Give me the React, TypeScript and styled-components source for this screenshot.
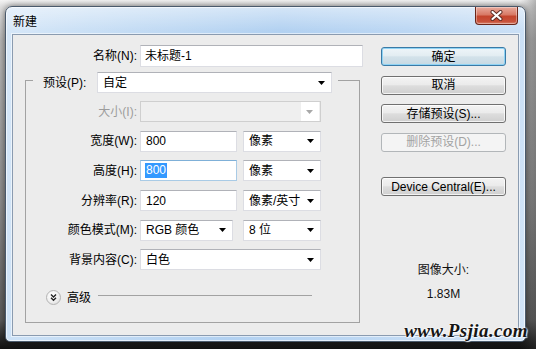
import React from "react";
import styled, { createGlobalStyle, css } from "styled-components";

const Global = createGlobalStyle`
  html, body { margin: 0; padding: 0; }
  body {
    width: 536px;
    height: 349px;
    overflow: hidden;
    background:
      linear-gradient(to right, rgba(0,0,0,0) 0, rgba(0,0,0,0) 520px, rgba(60,60,60,.35) 536px),
      linear-gradient(to bottom, #f4f4f4 0, #e2e2e2 6px, #b8b8b8 40px, #8e8e8e 200px, #5c5c5c 320px, #1c1c1c 343px, #111 349px);
    font-family: "Liberation Sans", "Noto Sans CJK SC", sans-serif;
    font-size: 12px;
    color: #000;
  }
`;

const Stage = styled.div`
  position: relative;
  width: 536px;
  height: 349px;
  box-sizing: border-box;
  padding: 6px 0 0 5px;
`;

const Window = styled.div`
  width: 521px;
  height: 336px;
  box-sizing: border-box;
  border: 1px solid #4a5a6c;
  border-radius: 7px 7px 5px 5px;
  padding: 0 6px 5px 6px;
  display: flex;
  flex-direction: column;
  background:
    linear-gradient(to bottom, rgba(255,255,255,.45) 0, rgba(255,255,255,0) 24px),
    linear-gradient(100deg, #d6e7f8 0%, #c4dcf4 22%, #b2d1f1 48%, #bcd7f3 70%, #d2e4f7 100%);
  box-shadow: 0 0 7px rgba(0,0,0,.55), inset 0 0 0 1px rgba(255,255,255,.6);
`;

const TitleBar = styled.div`
  height: 27px;
  display: flex;
  align-items: center;
  justify-content: space-between;
  padding: 0 1px 0 1px;
`;

const Title = styled.span`
  font-size: 12px;
  color: #000;
  text-shadow: 0 0 6px rgba(255,255,255,.9);
`;

const CloseButton = styled.div`
  align-self: flex-start;
  width: 43px;
  height: 18px;
  box-sizing: border-box;
  border: 1px solid #6b2518;
  border-top: none;
  border-radius: 0 0 4px 4px;
  background: linear-gradient(to bottom, #e9ab9d 0%, #d87a66 45%, #c4452d 55%, #c8513a 85%, #d9846f 100%);
  box-shadow: inset 0 0 0 1px rgba(255,255,255,.35);
  display: flex;
  align-items: center;
  justify-content: center;
`;

const Client = styled.div`
  flex: 1;
  box-sizing: border-box;
  border: 1px solid #8a9bb0;
  box-shadow: 0 0 0 1px rgba(255,255,255,.55);
  background: #ececec;
  display: flex;
  padding: 10px 0 0 12px;
`;

const LeftCol = styled.div`
  width: 338px;
  display: flex;
  flex-direction: column;
`;

const NameRow = styled.div`
  display: grid;
  grid-template-columns: 112px 223px;
  column-gap: 3px;
  height: 22px;
  align-items: center;
`;

const Label = styled.span<{ $disabled?: boolean; $w?: number }>`
  text-align: right;
  white-space: nowrap;
  color: ${(p) => (p.$disabled ? "#9c9c9c" : "#000")};
  line-height: 16px;
  ${(p) =>
    p.$w &&
    css`
      width: ${p.$w}px;
      text-align: left;
    `}
`;

const Field = styled.div<{ $w?: number; $h?: number; $focused?: boolean; $disabled?: boolean; $pad?: number }>`
  width: ${(p) => (p.$w ? `${p.$w}px` : "100%")};
  height: ${(p) => p.$h ?? 21}px;
  box-sizing: border-box;
  background: #fff;
  border: 1px solid #dcdde3;
  border-top-color: #b0b2b8;
  display: flex;
  align-items: center;
  padding-left: ${(p) => p.$pad ?? 5}px;
  white-space: nowrap;
  line-height: 16px;
  ${(p) =>
    p.$focused &&
    css`
      border-color: #a9cbe6;
      border-top-color: #7fb0d8;
    `}
  ${(p) =>
    p.$disabled &&
    css`
      background: #efefef;
      border-color: #cfcfcf;
      padding-right: 1px;
    `}
`;

const ArrowBox = styled.span<{ $disabled?: boolean }>`
  margin-left: auto;
  width: 17px;
  height: 100%;
  display: flex;
  align-items: center;
  justify-content: center;
  padding-right: 1px;
  ${(p) =>
    p.$disabled &&
    css`
      background: #fff;
    `}
`;

const Selected = styled.span`
  background: #3399ff;
  color: #fff;
  padding: 0 1px;
  line-height: 15px;
`;

const GroupBox = styled.fieldset`
  width: 335px;
  box-sizing: border-box;
  margin: 0;
  min-inline-size: 0;
  border: 1px solid #a2a2a2;
  padding: 8px 0 16px 0;
`;

const Legend = styled.legend`
  margin-left: 7px;
  padding: 5px 6px 0 10px;
`;

const LegendInner = styled.div`
  display: flex;
  align-items: center;
  gap: 4px;
`;

const Rows = styled.div`
  display: grid;
  grid-template-columns: 111px 181px;
  column-gap: 3px;
  row-gap: 8.7px;
  grid-auto-rows: 21px;
  align-items: center;
`;

const Pair = styled.div<{ $gap: number }>`
  display: flex;
  gap: ${(p) => p.$gap}px;
`;

const AdvancedRow = styled.div`
  margin-top: 19.5px;
  height: 16px;
  display: flex;
  align-items: center;
  padding-left: 20px;
  margin-right: 47px;
`;

const RoundButton = styled.div`
  width: 15px;
  height: 15px;
  box-sizing: border-box;
  border-radius: 50%;
  border: 1px solid #b4b4b4;
  background: radial-gradient(circle at 40% 35%, #ffffff 0%, #f1f1f1 50%, #d6d6d6 100%);
  display: flex;
  align-items: center;
  justify-content: center;
`;

const AdvancedText = styled.span`
  margin-left: 6px;
  line-height: 16px;
`;

const Rule = styled.div`
  flex: 1;
  height: 1px;
  background: #a2a2a2;
  margin: 0 0 4px 7px;
`;

const RightCol = styled.div`
  width: 125px;
  margin-left: 18px;
  padding-top: 2px;
  display: flex;
  flex-direction: column;
`;

const Buttons = styled.div`
  display: flex;
  flex-direction: column;
  gap: 9.5px;
`;

const Button = styled.div<{ $variant?: "default" | "disabled"; $spaced?: boolean }>`
  height: 19px;
  box-sizing: border-box;
  border: 1px solid #707070;
  border-radius: 3px;
  background: linear-gradient(to bottom, #f3f3f3 0%, #ebebeb 45%, #dddddd 52%, #cfcfcf 100%);
  box-shadow: inset 0 0 0 1px rgba(255,255,255,.75);
  display: flex;
  align-items: center;
  justify-content: center;
  line-height: 16px;
  color: #000;
  white-space: nowrap;
  ${(p) =>
    p.$spaced &&
    css`
      margin-top: 16px;
    `}
  ${(p) =>
    p.$variant === "default" &&
    css`
      border-color: #3a7aa6;
      background: linear-gradient(to bottom, #eef5f9 0%, #e3edf2 45%, #d3e2ea 52%, #c6d9e3 100%);
      box-shadow: inset 0 0 0 1px #8fd3f4;
    `}
  ${(p) =>
    p.$variant === "disabled" &&
    css`
      border-color: #b2b6b9;
      background: #f4f4f4;
      box-shadow: none;
      color: #a3a3a3;
    `}
`;

const SizeInfo = styled.div`
  margin-top: 66px;
  display: flex;
  flex-direction: column;
  align-items: center;
  gap: 8px;
  line-height: 16px;
  color: #111;
`;

const Watermark = styled.div`
  position: absolute;
  right: 8px;
  bottom: 9px;
  font-family: "Liberation Serif", "DejaVu Serif", serif;
  font-style: italic;
  font-weight: bold;
  font-size: 19px;
  line-height: 19px;
  letter-spacing: 0.4px;
  color: #151515;
  text-shadow: 0 0 2px #fff, 0 0 2px #fff, 1px 1px 1px rgba(255,255,255,.8);
`;

const Arrow = ({ disabled }: { disabled?: boolean }) => (
  <ArrowBox $disabled={disabled}>
    <svg width="7" height="4" viewBox="0 0 7 4">
      <path d="M0 0 H7 L3.5 4 Z" fill={disabled ? "#a8a8a8" : "#000"} />
    </svg>
  </ArrowBox>
);

const CloseX = () => (
  <svg width="13" height="11" viewBox="0 0 13 11">
    <path d="M2.5 2 L10.5 9 M10.5 2 L2.5 9" stroke="#5a2a22" strokeWidth="4" strokeLinecap="round" />
    <path d="M2.5 2 L10.5 9 M10.5 2 L2.5 9" stroke="#ffffff" strokeWidth="2.2" strokeLinecap="round" />
  </svg>
);

const DoubleChevron = () => (
  <svg width="9" height="9" viewBox="0 0 9 9">
    <path d="M2 1.5 L4.5 4 L7 1.5 M2 4.8 L4.5 7.3 L7 4.8" stroke="#222" strokeWidth="1.4" fill="none" />
  </svg>
);

export default function App() {
  return (
    <>
      <Global />
      <Stage>
        <Window>
          <TitleBar>
            <Title>新建</Title>
            <CloseButton>
              <CloseX />
            </CloseButton>
          </TitleBar>
          <Client>
            <LeftCol>
              <NameRow>
                <Label>名称(N):</Label>
                <Field $h={22} $pad={4}>未标题-1</Field>
              </NameRow>
              <GroupBox>
                <Legend>
                  <LegendInner>
                    <Label $w={50}>预设(P):</Label>
                    <Field $w={235}>
                      自定
                      <Arrow />
                    </Field>
                  </LegendInner>
                </Legend>
                <Rows>
                  <Label $disabled>大小(I):</Label>
                  <Field $disabled>
                    <Arrow disabled />
                  </Field>

                  <Label>宽度(W):</Label>
                  <Pair $gap={6}>
                    <Field $w={97}>800</Field>
                    <Field $w={78}>
                      像素
                      <Arrow />
                    </Field>
                  </Pair>

                  <Label>高度(H):</Label>
                  <Pair $gap={6}>
                    <Field $w={97} $focused $pad={4}>
                      <Selected>800</Selected>
                    </Field>
                    <Field $w={78}>
                      像素
                      <Arrow />
                    </Field>
                  </Pair>

                  <Label>分辨率(R):</Label>
                  <Pair $gap={6}>
                    <Field $w={97}>120</Field>
                    <Field $w={78}>
                      像素/英寸
                      <Arrow />
                    </Field>
                  </Pair>

                  <Label>颜色模式(M):</Label>
                  <Pair $gap={10}>
                    <Field $w={93}>
                      RGB 颜色
                      <Arrow />
                    </Field>
                    <Field $w={78}>
                      8 位
                      <Arrow />
                    </Field>
                  </Pair>

                  <Label>背景内容(C):</Label>
                  <Field>
                    白色
                    <Arrow />
                  </Field>
                </Rows>
                <AdvancedRow>
                  <RoundButton>
                    <DoubleChevron />
                  </RoundButton>
                  <AdvancedText>高级</AdvancedText>
                  <Rule />
                </AdvancedRow>
              </GroupBox>
            </LeftCol>
            <RightCol>
              <Buttons>
                <Button $variant="default">确定</Button>
                <Button>取消</Button>
                <Button>存储预设(S)...</Button>
                <Button $variant="disabled">删除预设(D)...</Button>
                <Button $spaced>Device Central(E)...</Button>
              </Buttons>
              <SizeInfo>
                <span>图像大小:</span>
                <span>1.83M</span>
              </SizeInfo>
            </RightCol>
          </Client>
        </Window>
        <Watermark>www.Psjia.com</Watermark>
      </Stage>
    </>
  );
}
